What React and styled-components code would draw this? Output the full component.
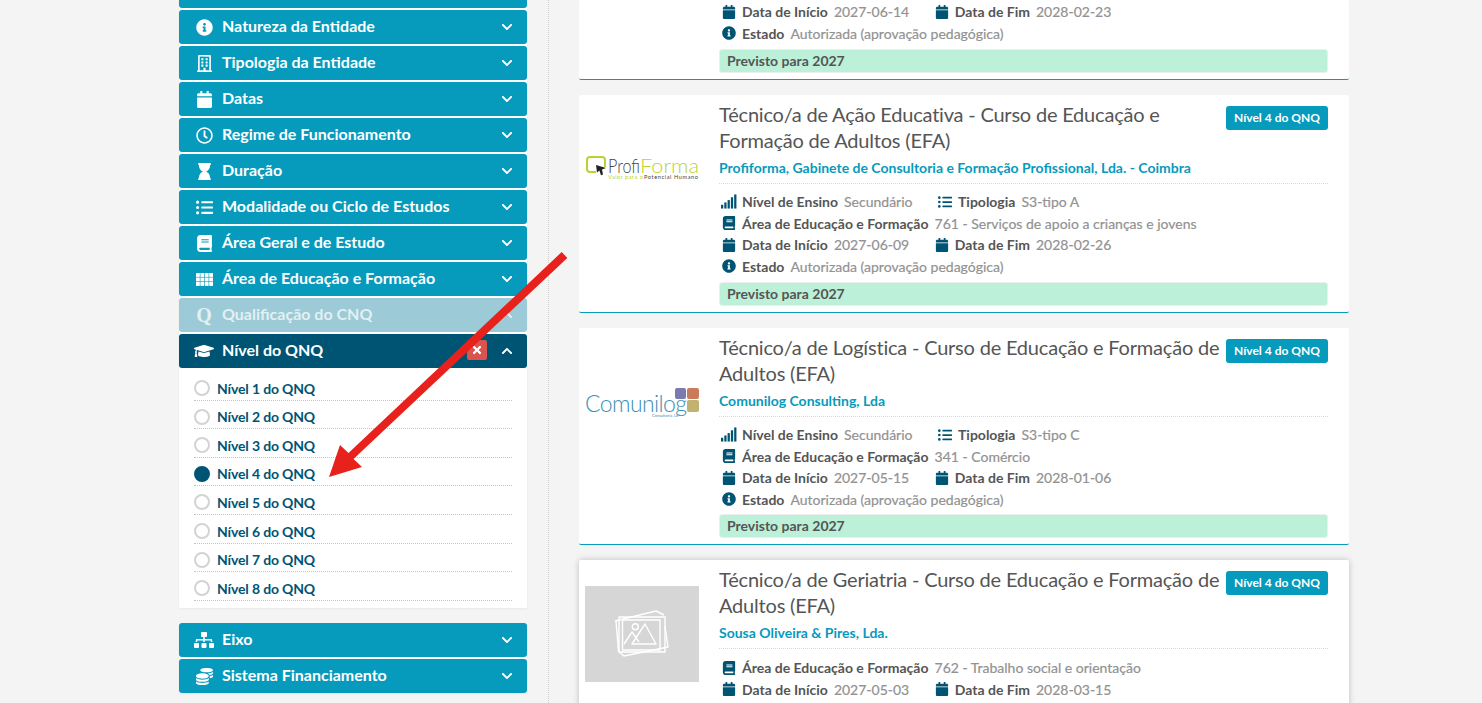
import React from "react";
import styled, { createGlobalStyle } from "styled-components";
import {
  FaInfoCircle, FaRegBuilding, FaCalendar, FaRegClock, FaHourglass, FaListUl, FaBook,
  FaGraduationCap, FaSitemap, FaCoins, FaChevronDown, FaChevronUp, FaTimes,
} from "react-icons/fa";

const Global = createGlobalStyle`
  html, body { margin: 0; padding: 0; background: #f4f4f4; }
  body { font-family: Lato, "Liberation Sans", sans-serif; }
  * { box-sizing: border-box; }
`;

const Page = styled.div`
  position: relative;
  display: flex;
  width: 1482px;
  height: 703px;
  overflow: hidden;
  padding-left: 179px;
  background: #f4f4f4;
`;
const SideColumn = styled.aside`
  width: 370px;
  height: 703px;
  padding-right: 21px;
  border-right: 1px dotted #cfcfcf;
  flex: none;
`;
const Group = styled.div`
  background: #fff;
  margin-bottom: 15px;
  box-shadow: 0 1px 2px rgba(0, 0, 0, 0.05);
`;
const Stub = styled.div`
  height: 8px;
  margin-bottom: 2px;
  background: #069abc;
  border-radius: 0 0 3px 3px;
`;
const Header = styled.div`
  display: flex;
  align-items: center;
  height: 34px;
  padding: 0 14px 0 15px;
  margin-bottom: ${(p) => (p.$flush ? 0 : 2)}px;
  border-radius: 3px;
  color: #fff;
  font-size: 16px;
  font-weight: 700;
  background: ${(p) => (p.$active ? "#005473" : p.$muted ? "#9ccbd7" : "#069abc")};
  & > span { color: ${(p) => (p.$muted ? "rgba(255,255,255,.72)" : "#fff")}; }
`;
const HeadIcon = styled.span`
  display: flex;
  align-items: center;
  justify-content: center;
  width: 20px;
  margin-right: 8px;
  font-size: ${(p) => (p.$glyph ? 20 : 17)}px;
  flex: none;
  font-family: "Liberation Serif", serif;
  font-weight: 700;
  line-height: 1;
`;
const HeadTitle = styled.span`
  flex: 1;
  position: relative;
  top: -2px;
`;
const Chevron = styled.span`
  display: flex;
  font-size: 12px;
  margin-top: -1px;
`;
const Clear = styled.span`
  display: flex;
  align-items: center;
  justify-content: center;
  width: 20px;
  height: 20px;
  margin-right: 14px;
  border-radius: 2px;
  background: #d9534f;
  font-size: 12px;
  margin-top: -2px;
`;
const Options = styled.div`
  padding: 4px 15px 7px;
  height: 240px;
`;
const Option = styled.div`
  display: flex;
  align-items: center;
  height: 28.6px;
  padding-top: 4.6px;
  border-bottom: 1px dotted #c4c4c4;
  color: #005473;
  font-size: 14px;
  font-weight: 700;
  letter-spacing: -0.15px;
`;
const Radio = styled.span`
  width: 16px;
  height: 16px;
  margin-right: 7px;
  border-radius: 50%;
  flex: none;
  border: 2px solid ${(p) => (p.$on ? "#005473" : "#d3d3d3")};
  background: ${(p) => (p.$on ? "#005473" : "#fff")};
`;

const Main = styled.main`
  width: 770px;
  margin-left: 30px;
  flex: none;
`;
const Card = styled.article`
  display: flex;
  height: ${(p) => p.$h}px;
  margin-bottom: 15px;
  padding: ${(p) => (p.$clipped ? "1px" : "7px")} 21px 0 6px;
  background: #fff;
  border-bottom: 1px solid #069abc;
  border-radius: 2px;
  overflow: hidden;
  ${(p) => p.$raised && "box-shadow: 0 0 6px rgba(0,0,0,.22); overflow: visible; border-bottom: 0;"}
`;
const LogoBox = styled.div`
  display: flex;
  align-items: center;
  justify-content: center;
  width: 114px;
  height: 96px;
  margin: 19px 20px 0 0;
  flex: none;
  background: ${(p) => (p.$empty ? "#d6d6d6" : "transparent")};
`;
const Body = styled.div`
  flex: 1;
  min-width: 0;
  margin-left: ${(p) => (p.$indent ? "134px" : "0")};
`;
const TitleRow = styled.div`
  display: flex;
  justify-content: space-between;
  align-items: flex-start;
  gap: 4px;
`;
const Title = styled.h3`
  margin: -1px 0 1px;
  color: #555;
  font-size: 20px;
  font-weight: 400;
  line-height: 26px;
  letter-spacing: -0.2px;
`;
const Badge = styled.span`
  flex: none;
  width: 102px;
  height: 24px;
  margin-top: 4px;
  border-radius: 3px;
  background: #069abc;
  color: #fff;
  font-size: 12px;
  font-weight: 700;
  line-height: 24px;
  text-align: center;
`;
const Company = styled.div`
  height: 26px;
  margin-top: 4px;
  line-height: 20px;
  border-bottom: 1px dotted #d8d8d8;
  color: #069abc;
  font-size: 14px;
  font-weight: 700;
`;
const Details = styled.div`
  margin-top: ${(p) => p.$top}px;
  margin-bottom: ${(p) => p.$bottom ?? 5}px;
`;
const Row = styled.div`
  display: flex;
  align-items: center;
  height: 21.5px;
  font-size: 14px;
`;
const Field = styled.span`
  display: flex;
  align-items: center;
  margin-right: 22.5px;
`;
const FieldIcon = styled.span`
  display: flex;
  align-items: center;
  justify-content: center;
  width: 16px;
  margin: 0 5px 0 2px;
  color: #005473;
  font-size: 14px;
  flex: none;
`;
const Label = styled.span`
  color: #555;
  font-weight: 700;
  margin-right: 6px;
`;
const Value = styled.span`
  color: #929292;
  font-weight: 400;
  -webkit-text-stroke: 0.2px #929292;
`;
const Note = styled.div`
  height: 24px;
  padding-left: 7px;
  border: 1px solid #eee;
  border-radius: 3px;
  background: #bcf0d9;
  color: #555;
  font-size: 14px;
  font-weight: 700;
  line-height: 22px;
`;
const Overlay = styled.svg`
  position: absolute;
  left: 0;
  top: 0;
  pointer-events: none;
`;

const SignalIcon = () => (
  <svg width="17" height="15" viewBox="0 0 17 15" fill="currentColor">
    <rect x="0" y="11" width="2.4" height="4" />
    <rect x="3.5" y="8.5" width="2.4" height="6.5" />
    <rect x="7" y="6" width="2.4" height="9" />
    <rect x="10.5" y="3" width="2.4" height="12" />
    <rect x="14" y="0" width="2.4" height="15" />
  </svg>
);

const GridIcon = () => (
  <svg width="17" height="13" viewBox="0 0 17 13" fill="currentColor">
    {[0, 4.5, 9].flatMap((y) =>
      [0, 4.4, 8.8, 13.2].map((x) => <rect key={`${x}-${y}`} x={x} y={y} width="3.8" height="3.9" />)
    )}
  </svg>
);

const ProfiLogo = () => (
  <svg width="114" height="30" viewBox="0 0 114 30">
    <path d="M11 18H5a3 3 0 0 1-3-3V6a3 3 0 0 1 3-3h12a3 3 0 0 1 3 3v7" fill="none" stroke="#b9d335" strokeWidth="2" />
    <path d="M11 11l10 3-4 1.6 1 5-2 .6-1.6-4.6-2.4 2z" fill="#222" />
    <text x="23" y="18.5" fontFamily="Lato, sans-serif" fontWeight="300" fontSize="20" textLength="32" lengthAdjust="spacingAndGlyphs" fill="#444">Profi</text>
    <text x="55" y="18.5" fontFamily="Lato, sans-serif" fontWeight="300" fontSize="20" textLength="59" lengthAdjust="spacingAndGlyphs" fill="#b9d335">Forma</text>
    <text x="23" y="24.5" fontFamily="Lato, sans-serif" fontSize="5.6" fill="#b9d335" textLength="35">Valor para o</text>
    <text x="59" y="24.5" fontFamily="Lato, sans-serif" fontSize="5.6" fill="#444" textLength="54">Potencial Humano</text>
  </svg>
);

const ComunilogLogo = () => (
  <svg width="114" height="30" viewBox="0 0 114 30">
    <rect x="90" y="1" width="11" height="11" rx="2" fill="#7b7ab0" />
    <rect x="102" y="1" width="12" height="11" rx="2" fill="#c97b5a" />
    <rect x="102" y="13" width="12" height="12" rx="2" fill="#c0b270" />
    <text x="0" y="25" fontFamily="Lato, sans-serif" fontWeight="300" fontSize="23" textLength="102" lengthAdjust="spacing" fill="#3b8fb2">Comunilog</text>
    <text x="67" y="29.5" fontFamily="Lato, sans-serif" fontSize="4" fill="#3b8fb2">Consultoria, Ldª</text>
  </svg>
);

const PlaceholderIcon = () => (
  <svg width="56" height="48" viewBox="0 0 56 48" fill="none" stroke="#fff" strokeWidth="1.4" strokeLinejoin="round">
    <path d="M1 11L42 1l8 4" />
    <path d="M2 11l2.5 30M51 16l3 21-44 9-6-5" />
    <rect x="5" y="7" width="46" height="35" />
    <rect x="8.5" y="10" width="37.5" height="30" />
    <circle cx="21.3" cy="16.7" r="3" />
    <path d="M10 34l8-12 7 10" />
    <path d="M18 34l13-20 11 20z" />
  </svg>
);

const topItems = [
  [<FaInfoCircle />, "Natureza da Entidade"],
  [<FaRegBuilding />, "Tipologia da Entidade"],
  [<FaCalendar />, "Datas"],
  [<FaRegClock />, "Regime de Funcionamento"],
  [<FaHourglass />, "Duração"],
  [<FaListUl />, "Modalidade ou Ciclo de Estudos"],
  [<FaBook />, "Área Geral e de Estudo"],
  [<GridIcon />, "Área de Educação e Formação"],
];

const F = ({ icon, label, value }) => (
  <Field>
    <FieldIcon>{icon}</FieldIcon>
    <Label>{label}</Label>
    <Value>{value}</Value>
  </Field>
);

const Dates = ({ a, b }) => (
  <Row>
    <F icon={<FaCalendar />} label="Data de Início" value={a} />
    <F icon={<FaCalendar />} label="Data de Fim" value={b} />
  </Row>
);
const State = () => (
  <Row>
    <F icon={<FaInfoCircle />} label="Estado" value="Autorizada (aprovação pedagógica)" />
  </Row>
);

const Course = ({ logo, empty, title, company, tip, area, a, b, h, raised, noteGap }) => (
  <Card $h={h} $raised={raised}>
    <LogoBox $empty={empty}>{logo}</LogoBox>
    <Body>
      <TitleRow>
        <Title>{title}</Title>
        <Badge>Nível 4 do QNQ</Badge>
      </TitleRow>
      <Company>{company}</Company>
      <Details $top={tip ? 7 : 8} $bottom={noteGap}>
        {tip && (
          <Row>
            <F icon={<SignalIcon />} label="Nível de Ensino" value="Secundário" />
            <F icon={<FaListUl />} label="Tipologia" value={tip} />
          </Row>
        )}
        <Row><F icon={<FaBook />} label="Área de Educação e Formação" value={area} /></Row>
        <Dates a={a} b={b} />
        {tip && <State />}
      </Details>
      {tip && <Note>Previsto para 2027</Note>}
    </Body>
  </Card>
);

export default function App() {
  return (
    <Page>
      <Global />
      <SideColumn>
        <Group>
          <Stub />
          {topItems.map(([icon, t]) => (
            <Header key={t}>
              <HeadIcon>{icon}</HeadIcon>
              <HeadTitle>{t}</HeadTitle>
              <Chevron><FaChevronDown /></Chevron>
            </Header>
          ))}
          <Header $muted>
            <HeadIcon $glyph>Q</HeadIcon>
            <HeadTitle>Qualificação do CNQ</HeadTitle>
            <Chevron><FaChevronUp /></Chevron>
          </Header>
          <Header $active $flush>
            <HeadIcon><FaGraduationCap size={20} /></HeadIcon>
            <HeadTitle>Nível do QNQ</HeadTitle>
            <Clear><FaTimes /></Clear>
            <Chevron><FaChevronUp /></Chevron>
          </Header>
          <Options>
            {[1, 2, 3, 4, 5, 6, 7, 8].map((n) => (
              <Option key={n}>
                <Radio $on={n === 4} />
                Nível {n} do QNQ
              </Option>
            ))}
          </Options>
        </Group>
        <Group>
          <Header>
            <HeadIcon><FaSitemap size={20} /></HeadIcon>
            <HeadTitle>Eixo</HeadTitle>
            <Chevron><FaChevronDown /></Chevron>
          </Header>
          <Header>
            <HeadIcon><FaCoins /></HeadIcon>
            <HeadTitle>Sistema Financiamento</HeadTitle>
            <Chevron><FaChevronDown /></Chevron>
          </Header>
        </Group>
      </SideColumn>
      <Main>
        <Card $h={80} $clipped>
          <Body $indent>
            <Details $top={0}>
              <Dates a="2027-06-14" b="2028-02-23" />
              <State />
            </Details>
            <Note>Previsto para 2027</Note>
          </Body>
        </Card>
        <Course
          h={218}
          logo={<ProfiLogo />}
          title="Técnico/a de Ação Educativa - Curso de Educação e Formação de Adultos (EFA)"
          company="Profiforma, Gabinete de Consultoria e Formação Profissional, Lda. - Coimbra"
          tip="S3-tipo A"
          area="761 - Serviços de apoio a crianças e jovens"
          a="2027-06-09"
          b="2028-02-26"
        />
        <Course
          h={217}
          noteGap={4}
          logo={<ComunilogLogo />}
          title="Técnico/a de Logística - Curso de Educação e Formação de Adultos (EFA)"
          company="Comunilog Consulting, Lda"
          tip="S3-tipo C"
          area="341 - Comércio"
          a="2027-05-15"
          b="2028-01-06"
        />
        <Course
          h={217}
          raised
          empty
          logo={<PlaceholderIcon />}
          title="Técnico/a de Geriatria - Curso de Educação e Formação de Adultos (EFA)"
          company="Sousa Oliveira & Pires, Lda."
          area="762 - Trabalho social e orientação"
          a="2027-05-03"
          b="2028-03-15"
        />
      </Main>
      <Overlay width="1482" height="703" viewBox="0 0 1482 703">
        <polygon
          points="561.7,252 567.3,258 353.5,459 362,467 329,477 340,445 348.5,453"
          fill="#e8211c"
        />
      </Overlay>
    </Page>
  );
}
